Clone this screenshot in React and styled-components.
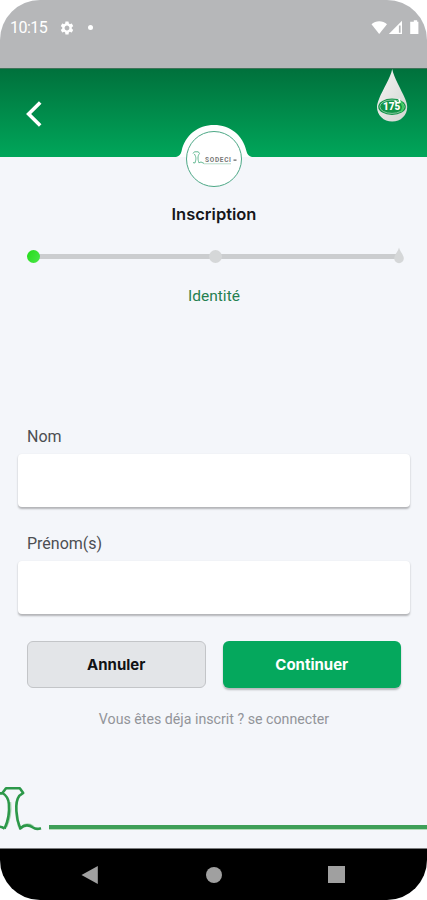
import React, { useState } from "react";
import styled, { createGlobalStyle } from "styled-components";
import { MdSettings } from "react-icons/md";

const steps = ["active", "todo", "drop"];

const StatusIcons = () => (
  <svg width="50" height="16" viewBox="0 0 50 16" fill="#fff">
    <path d="M0.5 4.2C4.5.3 12 .3 16 4.2L8.2 14Z" />
    <path d="M17.8 14 31 .8V14Z" />
    <path d="M27.9 5.6h1.7v7.2h-1.7z" fill="#b6b7b9" />
    <path d="M41 1.8h1.8V.2h3.4v1.6H47.4V14h-8.2V1.8Z" />
  </svg>
);

const DropLogo = () => (
  <svg width="32" height="54" viewBox="0 0 32 54">
    <defs>
      <linearGradient id="drop" x1="0" y1="0" x2="1" y2="1">
        <stop offset="0.2" stopColor="#eeeeec" />
        <stop offset="1" stopColor="#d3d6d2" />
      </linearGradient>
    </defs>
    <path
      d="M16.2 0C18 9 25 20 29 29.5C30.5 33 31.2 35.5 31.2 38C31.2 46.2 24.8 52.6 16.2 52.6S1 46.2 1 38C1 35.5 1.8 33 3.2 29.5C7 20 14.5 9 16.2 0Z"
      fill="url(#drop)"
    />
    <ellipse cx="16" cy="37.7" rx="13.8" ry="8.2" fill="#119447" />
    <ellipse
      cx="16"
      cy="37.7"
      rx="12.2"
      ry="6.7"
      fill="none"
      stroke="#b7dbc3"
      strokeWidth="0.7"
    />
    <path d="M24 32c3 3 4 7 1 11" stroke="#41cf62" strokeWidth="2" fill="none" />
    <path d="M18.5 31.6l2.4 1.8M23 29.8l1.2 4" stroke="#fff" strokeWidth="1.4" />
    <DropText x="15.6" y="41.4">
      175
    </DropText>
  </svg>
);

const BadgeLogo = () => (
  <svg width="46" height="20" viewBox="0 0 46 20">
    <path
      d="M2 4.6 3.4 2.8H7.3L8.5 4.6C6.2 7 7 11 7.9 13.8L10 13l3 1.4M3.4 5C5.6 8.5 5 11 3.9 14L2 13.6"
      fill="none"
      stroke="#64b993"
      strokeWidth="1"
    />
    <path d="M13 14.8H40" stroke="#b7dbc9" strokeWidth="1" />
    <BadgeText x="14" y="13" textLength="26">
      SODECI
    </BadgeText>
    <path d="M42.5 11.2h3" stroke="#666" strokeWidth="1.2" />
  </svg>
);

const FooterMark = () => (
  <svg width="42" height="48" viewBox="0 0 42 48" fill="none">
    <g stroke="#a9d7b3" strokeWidth="1.2">
      <path d="M18.8 11.5C14.6 17 14.8 31 18.4 41.5M10.6 17C11.6 25 10.4 34 6.8 42" />
      <path d="M22 41.2C26 38 30 38.6 33.5 41" />
    </g>
    <g stroke="#2c9849" strokeWidth="2.6" strokeLinejoin="round">
      <path d="M-1 8.4H2.5" />
      <path d="M4.6 43.6C8.6 35 9.6 27 8.9 19C8.6 13.8 6.4 10.4 2.4 8L6 3.3H19.8L23.2 8L19.3 10.8C16.2 15 16 20 16.4 26C16.8 33 18 38 20.2 43.5C24 39.8 28.6 39.6 33 42.5C35 44 38 44.2 41 43.2" />
      <path d="M4.6 43.6 2 42.2-1 41.5" />
    </g>
  </svg>
);

const StepDot = ({ type }) => {
  if (type === "drop") {
    return (
      <svg width="10" height="18" viewBox="0 0 10 18">
        <path
          d="M5 .6C5.6 4 9.8 8 9.8 11.4A4.8 4.8 0 0 1 .2 11.4C.2 8 4.4 4 5 .6Z"
          fill="#d5d7d8"
        />
      </svg>
    );
  }
  return <Dot $active={type === "active"} />;
};

const Field = ({ label, value, onChange }) => (
  <FieldLabel>
    <LabelText>{label}</LabelText>
    <Input value={value} onChange={(e) => onChange(e.target.value)} />
  </FieldLabel>
);

const App = () => {
  const [lastName, setLastName] = useState("");
  const [firstName, setFirstName] = useState("");

  return (
    <>
      <GlobalStyle />
      <Phone>
        <StatusBar>
          <Clock>10:15</Clock>
          <MdSettings size={16} />
          <Notification />
          <StatusRight>
            <StatusIcons />
          </StatusRight>
        </StatusBar>

        <Header>
          <BackButton aria-label="Retour">
            <svg width="18" height="28" viewBox="0 0 18 28">
              <path d="M15.2 2.4 3.6 14 15.2 25.6" fill="none" stroke="#fff" strokeWidth="3.6" />
            </svg>
          </BackButton>
          <DropLogo />
          <Badge>
            <BadgeBump width="76" height="32" viewBox="0 0 76 32">
              <path
                d="M0 32C3 31.5 5 29 5.6 26C9 10 22 0 38 0S67 10 70.4 26C71 29 73 31.5 76 32Z"
                fill="#fdfefe"
              />
            </BadgeBump>
            <BadgeRing>
              <BadgeLogo />
            </BadgeRing>
          </Badge>
        </Header>

        <Content>
          <Title>Inscription</Title>
          <Stepper>
            {steps.map((type) => (
              <StepDot key={type} type={type} />
            ))}
          </Stepper>
          <StepName>Identité</StepName>

          <Form>
            <Field label="Nom" value={lastName} onChange={setLastName} />
            <Field label="Prénom(s)" value={firstName} onChange={setFirstName} />
            <Buttons>
              <Button>Annuler</Button>
              <Button $primary>Continuer</Button>
            </Buttons>
          </Form>
          <LoginLink>Vous êtes déja inscrit ? se connecter</LoginLink>
        </Content>

        <Footer>
          <FooterMark />
          <FooterLine />
        </Footer>

        <NavBar>
          <svg width="18" height="20" viewBox="0 0 18 20">
            <path d="M.5 10 16.8 1V19Z" fill="#a0a0a0" />
          </svg>
          <NavHome />
          <NavRecent />
        </NavBar>
      </Phone>
    </>
  );
};

const GlobalStyle = createGlobalStyle`
  body {
    margin: 0;
    background: #fff;
    font-family: Roboto, "Liberation Sans", sans-serif;
  }
  * {
    box-sizing: border-box;
  }
  svg {
    display: block;
    flex-shrink: 0;
  }
`;

const Phone = styled.div`
  display: flex;
  flex-direction: column;
  width: 427px;
  height: 900px;
  border-radius: 40px;
  overflow: hidden;
  background-color: #f4f6fa;
`;

const StatusBar = styled.div`
  display: flex;
  align-items: center;
  height: 68px;
  padding: 0 7px 13px 10px;
  background-color: #b6b7b9;
  color: #fff;
`;

const Clock = styled.div`
  width: 49px;
  font-size: 16px;
  letter-spacing: -0.5px;
`;

const Notification = styled.div`
  width: 5px;
  height: 5px;
  margin-left: 13px;
  border-radius: 50%;
  background-color: #fff;
`;

const StatusRight = styled.div`
  margin-left: auto;
  margin-right: -1px;
`;

const Header = styled.header`
  position: relative;
  display: flex;
  justify-content: space-between;
  height: 89px;
  padding: 0 19px 0 25px;
  border-top: 1px solid #3e7358;
  background: linear-gradient(#00713c, #00a65a);
`;

const BackButton = styled.button`
  align-self: flex-start;
  margin-top: 31px;
  padding: 0;
  border: 0;
  background: none;
  cursor: pointer;
`;

/* overlaps the bottom edge of the header */
const Badge = styled.div`
  position: absolute;
  left: 176px;
  top: 56px;
  display: flex;
  flex-direction: column;
  align-items: center;
  width: 76px;
`;

const BadgeBump = styled.svg`
  margin-bottom: -26px;
`;

const BadgeRing = styled.div`
  display: flex;
  justify-content: center;
  align-items: center;
  width: 56px;
  height: 56px;
  border: 1px solid #4da886;
  border-radius: 50%;
  background-color: #fff;
`;

const BadgeText = styled.text`
  font: 700 6.5px Roboto, sans-serif;
  fill: #777;
`;

const DropText = styled.text`
  font: 900 10px Roboto, sans-serif;
  fill: #fff;
  text-anchor: middle;
`;

const Content = styled.main`
  display: flex;
  flex-direction: column;
  height: 624px;
  padding: 0 17px 0 18px;
`;

const Title = styled.h1`
  margin: 46px 0 0;
  font-family: Inter, Roboto, sans-serif;
  font-size: 16.5px;
  font-weight: 600;
  line-height: 22px;
  text-align: center;
  color: #16171a;
`;

const Stepper = styled.div`
  display: flex;
  justify-content: space-between;
  align-items: center;
  height: 20px;
  margin: 21px 6px 0 9px;
  background: linear-gradient(#cbcdcf, #cbcdcf) 8px 8px / 361px 5px no-repeat;

  > svg {
    margin-top: -1px;
  }
`;

const Dot = styled.div`
  width: 13px;
  height: 13px;
  margin-top: 1px;
  border-radius: 50%;
  background: ${(props) =>
    props.$active ? "linear-gradient(120deg, #24dc18, #4be64a)" : "#d5d7d8"};

  & + & {
    margin-left: -3px;
  }
`;

const StepName = styled.div`
  margin-top: 20px;
  font-size: 15.5px;
  line-height: 20px;
  text-align: center;
  color: #24804f;
`;

const Form = styled.form`
  margin-top: 121px;
`;

const FieldLabel = styled.label`
  display: block;
  height: 107px;
`;

const LabelText = styled.span`
  display: block;
  height: 27px;
  padding-left: 9px;
  font-size: 16px;
  line-height: 20px;
  color: #4c4e52;
`;

const Input = styled.input`
  display: block;
  width: 100%;
  height: 53px;
  padding: 0 12px;
  border: 0;
  border-radius: 4px;
  outline: none;
  font: inherit;
  background-color: #fff;
  box-shadow: 0 1.5px 2px rgba(0, 0, 0, 0.27);
`;

const Buttons = styled.div`
  display: grid;
  grid-template-columns: 1fr 1fr;
  gap: 17px;
  padding: 0 9px;
`;

const Button = styled.button.attrs({ type: "button" })`
  height: 47px;
  padding: 0;
  border: ${(props) => (props.$primary ? "0" : "1px solid #c3c5c8")};
  border-radius: 6px;
  font-family: Inter, Roboto, sans-serif;
  font-size: 15px;
  font-weight: 700;
  cursor: pointer;
  color: ${(props) => (props.$primary ? "#fff" : "#111214")};
  background-color: ${(props) => (props.$primary ? "#05a85d" : "#e3e5e8")};
  box-shadow: ${(props) =>
    props.$primary ? "0 2px 2px rgba(0, 0, 0, 0.25)" : "none"};
`;

const LoginLink = styled.div`
  margin-top: 21px;
  font-size: 14.2px;
  line-height: 20px;
  text-align: center;
  color: #929499;
`;

const Footer = styled.footer`
  display: flex;
  align-items: flex-end;
  gap: 7px;
  flex: 1;
  padding-bottom: 15px;
`;

const FooterLine = styled.div`
  flex: 1;
  height: 5px;
  margin-bottom: 3px;
  border-bottom: 1px solid #b4dcb9;
  background-color: #3f9f58;
`;

const NavBar = styled.nav`
  display: flex;
  justify-content: space-between;
  align-items: center;
  height: 52px;
  padding: 0 82px 0 81px;
  border-top: 1px solid #7b7c7e;
  background-color: #000;
`;

const NavHome = styled.div`
  width: 16px;
  height: 16px;
  margin-left: 1px;
  border-radius: 50%;
  background-color: #a0a0a0;
`;

const NavRecent = styled.div`
  width: 17px;
  height: 17px;
  background-color: #a0a0a0;
`;

export default App;
